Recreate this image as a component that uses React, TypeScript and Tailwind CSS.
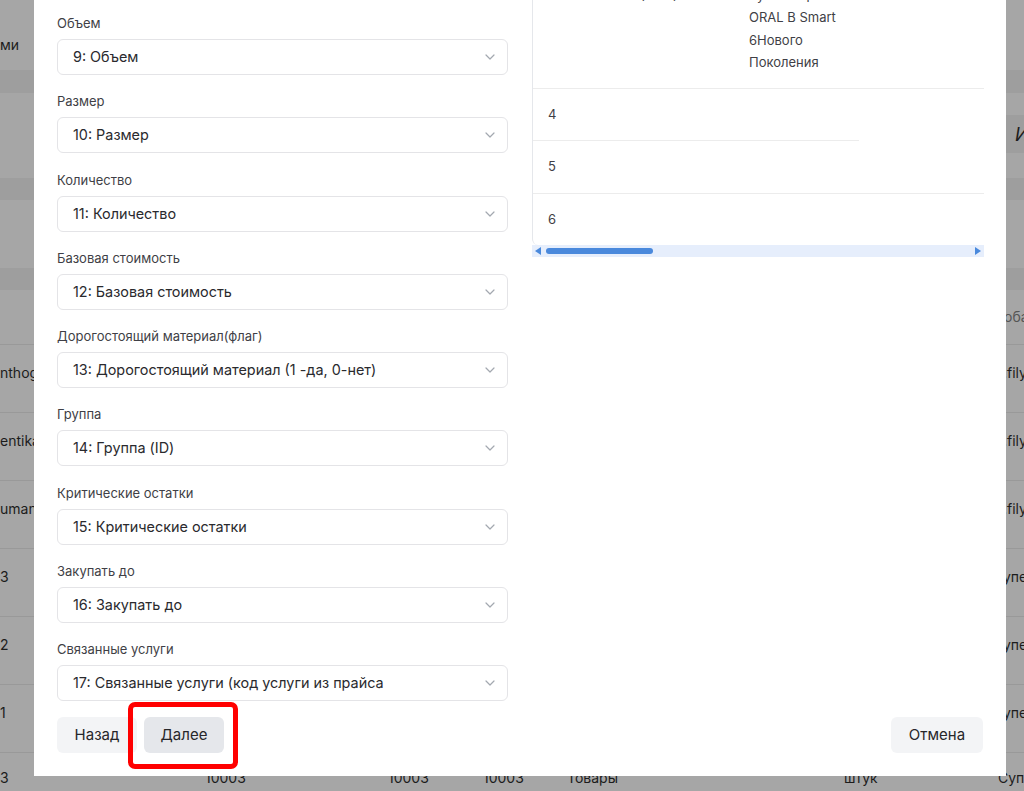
import React from "react";

const fields: [string, string][] = [
  ["Объем", "9: Объем"],
  ["Размер", "10: Размер"],
  ["Количество", "11: Количество"],
  ["Базовая стоимость", "12: Базовая стоимость"],
  ["Дорогостоящий материал(флаг)", "13: Дорогостоящий материал (1 -да, 0-нет)"],
  ["Группа", "14: Группа (ID)"],
  ["Критические остатки", "15: Критические остатки"],
  ["Закупать до", "16: Закупать до"],
  ["Связанные услуги", "17: Связанные услуги (код услуги из прайса"],
];

const bgRows: [string, string][] = [
  ["nthog", ".fily"],
  ["entika", ".fily"],
  ["umani", ".fily"],
  ["3", "упе"],
  ["2", "упе"],
  ["1", "упе"],
];

function Chevron() {
  return (
    <svg width="10" height="6" viewBox="0 0 10 6" fill="none" className="shrink-0">
      <path d="M1 1l4 4 4-4" stroke="#a3a8b0" strokeWidth="1.2" strokeLinecap="round" strokeLinejoin="round" />
    </svg>
  );
}

function Field({ label, value }: { label: string; value: string }) {
  return (
    <div className="flex flex-col">
      <div className="mb-[6px] h-[20px] text-[13px] leading-[20px] text-[#3f3f46]">{label}</div>
      <div className="flex h-[36px] items-center justify-between rounded-[6px] border border-[#e4e4e7] bg-white pl-[15px] pr-[12px]">
        <span className="text-[14.4px] text-[#2a2a2e]">{value}</span>
        <Chevron />
      </div>
    </div>
  );
}

function Background() {
  return (
    <div className="flex w-full flex-col text-[14px] text-[#1c1c1c]">
      <div className="flex h-[70px] items-end pb-[15px] leading-[20px]">
        <span>ми</span>
      </div>
      <div className="h-[23px] bg-[#9e9e9e]" />
      <div className="h-[22px]" />
      <div className="flex h-[38px]">
        <div className="flex-1" />
        <div className="flex w-[120px] items-center bg-[#9e9e9e] pl-[111px] text-[18px] italic">И</div>
      </div>
      <div className="h-[25px]" />
      <div className="h-[22px] bg-[#9e9e9e]" />
      <div className="h-[68px]" />
      <div className="h-[22px] bg-[#9e9e9e]" />
      <div className="flex h-[55px] items-center border-b border-[#999999] pb-[2px]">
        <div className="flex-1" />
        <div className="w-[24px] overflow-hidden whitespace-nowrap text-[#555555]">,оба</div>
      </div>
      {bgRows.map(([l, r], i) => (
        <div key={i} className="flex h-[68px] border-b border-[#999999] pt-[18px] leading-[20px]">
          <div className="w-[34px] overflow-hidden whitespace-nowrap">{l}</div>
          <div className="flex-1" />
          <div className="w-[21px] overflow-hidden whitespace-nowrap">{r}</div>
        </div>
      ))}
      <div className="flex h-[68px] pt-[15px] leading-[20px]">
        <div className="w-[205px]">3</div>
        <div className="w-[183px]">10003</div>
        <div className="w-[95px]">10003</div>
        <div className="w-[84px]">10003</div>
        <div className="w-[277px]">Товары</div>
        <div className="w-[154px]">штук</div>
        <div className="flex-1 overflow-hidden whitespace-nowrap">Супе</div>
      </div>
    </div>
  );
}

function Scrollbar() {
  return (
    <div className="flex h-[12px] items-center bg-[#e6eefc] px-[3px]">
      <svg width="6" height="8" viewBox="0 0 6 8" className="shrink-0">
        <path d="M6 0v8L0 4z" fill="#4a89dc" />
      </svg>
      <div className="ml-[5px] h-[6px] w-[107px] rounded-full bg-[#4a89dc]" />
      <div className="flex-1" />
      <svg width="6" height="8" viewBox="0 0 6 8" className="shrink-0">
        <path d="M0 0v8l6-4z" fill="#4a89dc" />
      </svg>
    </div>
  );
}

function RightPanel() {
  return (
    <div className="-mt-[32px] flex flex-col text-[13px] text-[#3f3f46]">
      <div className="overflow-hidden rounded-bl-[6px] border-l border-[#e5e7eb]">
        <div className="flex border-b border-[#ececec] pb-[15px] pt-[16px] leading-[22.3px]">
          <div className="w-[107px] pl-[15px]" />
          <div className="w-[109px]">(ID: 3)</div>
          <div className="flex flex-col">
            <span>Зубная щетка</span>
            <span>ORAL B Smart</span>
            <span>6Нового</span>
            <span>Поколения</span>
          </div>
        </div>
        <div className="flex h-[51px] items-center pl-[15px]">4</div>
        <div className="h-[1px] w-[326px] bg-[#ececec]" />
        <div className="flex h-[53px] items-center border-b border-[#ececec] pl-[15px]">5</div>
        <div className="flex h-[51px] items-center pl-[15px]">6</div>
      </div>
      <Scrollbar />
    </div>
  );
}

export default function App() {
  return (
    <div className="relative h-[791px] w-[1024px] overflow-hidden bg-[#a6a6a6] font-['Inter',sans-serif]">
      <Background />
      <div className="absolute left-[34px] top-0 flex w-[972px] flex-col bg-white px-[23px] pb-[23px]">
        <div className="grid grid-cols-[451px_452px] gap-x-[24px]">
          <div className="flex flex-col gap-[16.25px] pt-[13px]">
            {fields.map(([l, v]) => (
              <Field key={l} label={l} value={v} />
            ))}
          </div>
          <RightPanel />
        </div>
        <div className="mt-[16px] flex items-center justify-between">
          <div className="flex items-center gap-[7px]">
            <button className="h-[36px] w-[80px] rounded-[6px] bg-[#f3f4f6] text-[15px] text-[#27272a]">Назад</button>
            <div className="relative">
              <button className="h-[36px] w-[80px] rounded-[6px] bg-[#e5e7eb] text-[15px] text-[#27272a]">Далее</button>
              <div className="pointer-events-none absolute -bottom-[16px] -left-[16px] -right-[14px] -top-[15px] rounded-[7px] border-[5px] border-[#ff0000]" />
            </div>
          </div>
          <button className="h-[36px] w-[92px] rounded-[6px] bg-[#f3f4f6] text-[15px] text-[#27272a]">Отмена</button>
        </div>
      </div>
    </div>
  );
}
